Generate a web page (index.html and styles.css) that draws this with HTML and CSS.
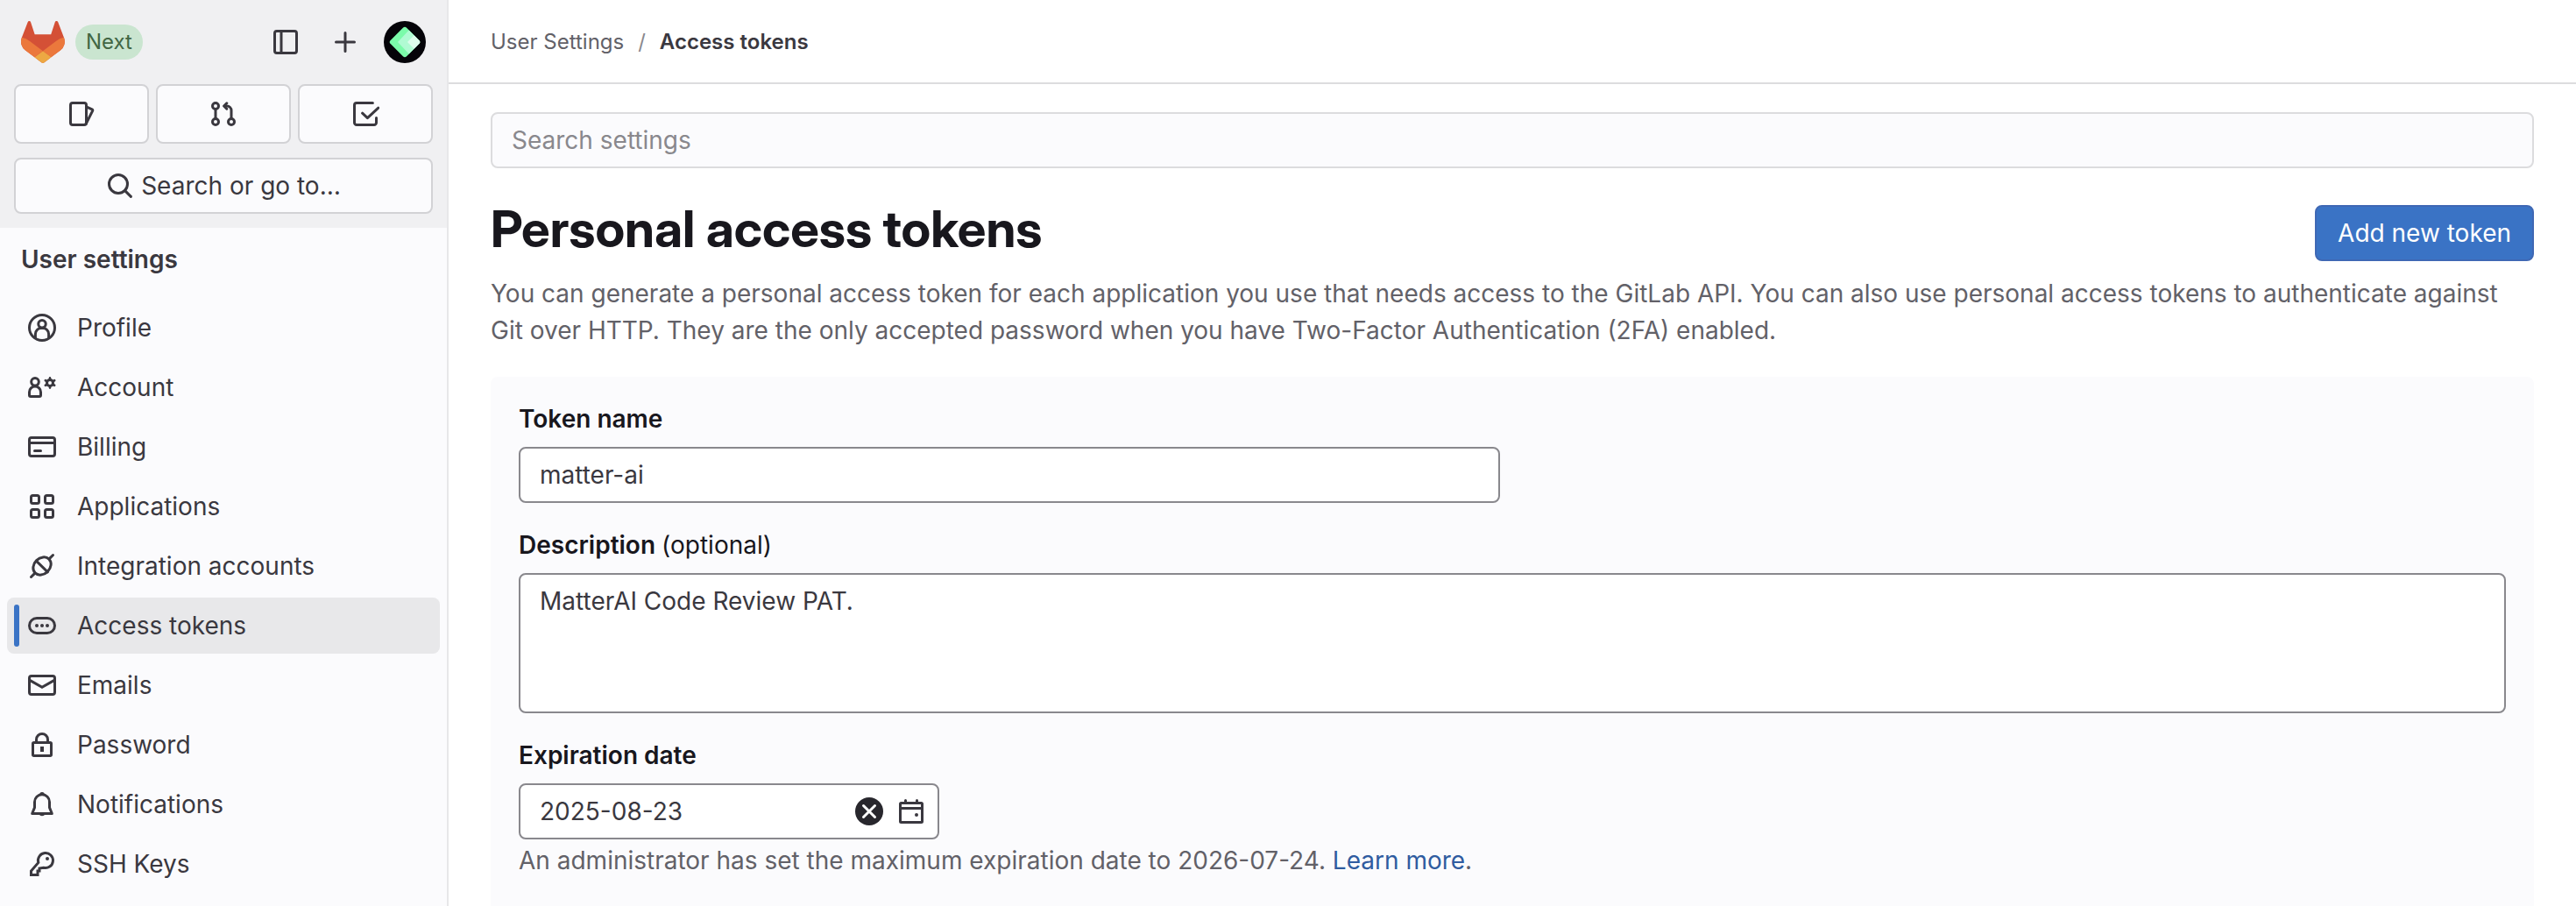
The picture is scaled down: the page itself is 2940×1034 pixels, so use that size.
FILE: index.html
```html
<!DOCTYPE html>
<html lang="en">
<head>
<meta charset="utf-8">
<title>Personal access tokens</title>
<link rel="stylesheet" href="styles.css">
</head>
<body class="page">
<aside class="sidebar">
  <div class="sidebar-top">
    <div class="brand-row">
      <a class="logo" href="#" aria-label="Homepage">
        <svg width="50" height="48" viewBox="0 0 25 24"><path fill="#d45036" d="M24.507 9.5l-.034-.09L21.082.562a.896.896 0 0 0-1.694.091l-2.29 7.01H7.825L5.535.653a.898.898 0 0 0-1.694-.09L.451 9.411.416 9.5a6.297 6.297 0 0 0 2.09 7.278l.012.01.03.022 5.16 3.867 2.56 1.935 1.554 1.176a1.051 1.051 0 0 0 1.268 0l1.555-1.176 2.56-1.935 5.197-3.89.014-.01A6.297 6.297 0 0 0 24.507 9.5z"/><path fill="#eb783c" d="M24.507 9.5l-.034-.09a11.44 11.44 0 0 0-4.56 2.051l-7.447 5.632 4.742 3.584 5.197-3.89.014-.01A6.297 6.297 0 0 0 24.507 9.5z"/><path fill="#eda843" d="M7.707 20.677l2.56 1.935 1.555 1.176a1.051 1.051 0 0 0 1.268 0l1.555-1.176 2.56-1.935-4.743-3.584-4.755 3.584z"/><path fill="#eb783c" d="M5.01 11.461a11.43 11.43 0 0 0-4.56-2.05L.416 9.5a6.297 6.297 0 0 0 2.09 7.278l.012.01.03.022 5.16 3.867 4.745-3.584-7.444-5.632z"/></svg>
      </a>
      <span class="badge">Next</span>
      <div class="brand-actions">
        <button class="icon-button" aria-label="Collapse sidebar"><svg class="icon" viewBox="0 0 16 16"><rect x="1.75" y="1.75" width="12.5" height="12.5" rx="1.2"/><path d="M5.5 2v12"/></svg></button>
        <button class="icon-button" aria-label="Create new"><svg class="icon" viewBox="0 0 16 16"><path stroke-linecap="round" d="M8 2.75v10.5M2.75 8h10.5"/></svg></button>
        <button class="avatar" aria-label="User menu"><svg width="48" height="48" viewBox="0 0 48 48"><circle cx="24" cy="24" r="24" fill="#050409"/><clipPath id="gem"><rect x="11" y="11" width="26" height="26" rx="3" transform="rotate(45 24 24)"/></clipPath><g clip-path="url(#gem)"><path fill="#7bfbaa" d="M0 0h48v48H0z"/><path fill="#b0fbd3" d="M31 8L16 24l15 16h17V8z"/><path fill="#defded" d="M36 15l-9 9 9 9h12V15z"/></g></svg></button>
      </div>
    </div>
    <div class="shortcuts">
      <button class="tile" aria-label="Issues"><svg class="icon" viewBox="0 0 16 16"><rect x="1.75" y="1.75" width="9" height="12.5" rx="1.2"/><path stroke-linejoin="round" d="M10.75 3.9l3.3 1.5a.6.6 0 0 1 .3.8L10.4 14"/></svg></button>
      <button class="tile" aria-label="Merge requests"><svg class="icon" viewBox="0 0 16 16"><circle cx="3.5" cy="3.5" r="1.75"/><circle cx="3.5" cy="12.5" r="1.75"/><circle cx="12.5" cy="12.5" r="1.75"/><path d="M3.5 5.25v5.5M12.5 10.75V6a2.5 2.5 0 0 0-2.5-2.5H8.4"/><path stroke-linecap="round" stroke-linejoin="round" d="M9.9 1.9L8.3 3.5l1.6 1.6"/></svg></button>
      <button class="tile" aria-label="To-do list"><svg class="icon" viewBox="0 0 16 16"><path stroke-linecap="round" d="M12.2 1.75H3A1.25 1.25 0 0 0 1.75 3v10A1.25 1.25 0 0 0 3 14.25h10A1.25 1.25 0 0 0 14.25 13v-2.800"/><path stroke-linecap="round" stroke-linejoin="round" d="M6.3 7.6l2.9 2.7 6.2-5.7"/></svg></button>
    </div>
    <button class="tile search-button"><svg class="icon" viewBox="0 0 16 16"><circle cx="7" cy="7" r="5.25"/><path stroke-linecap="round" d="M10.8 10.8l3.4 3.4"/></svg>Search or go to…</button>
  </div>
  <nav class="nav" aria-label="User settings">
    <h2 class="nav-title">User settings</h2>
    <ul class="nav-list">
      <li><a class="nav-item" href="#"><svg class="icon" viewBox="0 0 16 16"><circle cx="8" cy="8" r="7.25"/><circle cx="8" cy="5.9" r="2.1"/><path d="M4.200 14v-2.400A3.300 3.300 0 0 1 7.500 8.300h1a3.300 3.300 0 0 1 3.300 3.300V14"/></svg>Profile</a></li>
      <li><a class="nav-item" href="#"><svg class="icon" viewBox="0 0 16 16"><circle cx="4" cy="4.9" r="2.150"/><path d="M4 7.500A3.250 3.250 0 0 0 .75 10.750V12.500c0 .4.3.75.75.75h5c.4 0 .75-.3.75-.75V10.750A3.250 3.250 0 0 0 4 7.500z"/><circle cx="12.500" cy="5.500" r="1.750"/><path stroke-width="1.300" stroke-linecap="round" d="M12.500 2.700v.8M12.500 7.500v.8M9.900 4.100l.9.400M14.200 6.500l.9.400M9.900 6.900l.9-.4M14.200 4.500l.9-.4"/></svg>Account</a></li>
      <li><a class="nav-item" href="#"><svg class="icon" viewBox="0 0 16 16"><rect x=".75" y="2.750" width="14.500" height="10.500" rx="1.200"/><path d="M1 5.750h14"/><path stroke-linecap="round" d="M3.750 10.250h3.500"/></svg>Billing</a></li>
      <li><a class="nav-item" href="#"><svg class="icon" viewBox="0 0 16 16"><rect x="1.750" y="1.750" width="4.500" height="4.500" rx="1"/><rect x="9.750" y="1.750" width="4.500" height="4.500" rx="1"/><rect x="1.750" y="9.750" width="4.500" height="4.500" rx="1"/><rect x="9.750" y="9.750" width="4.500" height="4.500" rx="1"/></svg>Applications</a></li>
      <li><a class="nav-item" href="#"><svg class="icon" viewBox="0 0 16 16"><path stroke-linecap="round" d="M4.800 5.200l6.400 6.200M1.750 14.250L3.700 12.300M12.300 3.700l1.950-1.950"/><ellipse cx="8" cy="8" rx="5.600" ry="4.500" transform="rotate(-45 8 8)"/></svg>Integration accounts</a></li>
      <li><a class="nav-item nav-item-active" href="#" aria-current="page"><svg class="icon" viewBox="0 0 16 16"><rect x=".75" y="3.750" width="14.500" height="8.500" rx="4.250"/><g fill="currentColor" stroke="none"><circle cx="5" cy="8" r="1"/><circle cx="8" cy="8" r="1"/><circle cx="11" cy="8" r="1"/></g></svg>Access tokens</a></li>
      <li><a class="nav-item" href="#"><svg class="icon" viewBox="0 0 16 16"><rect x=".75" y="2.750" width="14.500" height="10.500" rx="1.200"/><path d="M1 5.200l7 3.900 7-3.900"/></svg>Emails</a></li>
      <li><a class="nav-item" href="#"><svg class="icon" viewBox="0 0 16 16"><rect x="2.750" y="6.750" width="10.500" height="7.500" rx=".6"/><path d="M4.750 6.750V5a3.250 3.250 0 0 1 6.500 0v1.750"/><path stroke-width="2" d="M8 9v3"/></svg>Password</a></li>
      <li><a class="nav-item" href="#"><svg class="icon" viewBox="0 0 16 16"><path stroke-linejoin="round" d="M3.750 6.600a4.250 4.250 0 0 1 8.500 0v3.200l1.400 3.450H2.350l1.400-3.450z"/><path fill="currentColor" stroke="none" d="M6.600 2.400a1.400 1.400 0 0 1 2.800 0zM6.300 13.500a1.750 1.500 0 0 0 3.400 0z"/></svg>Notifications</a></li>
      <li><a class="nav-item" href="#"><svg class="icon" viewBox="0 0 16 16"><path d="M5.900 7.200a4.250 4.250 0 1 1 2.900 2.900L6.500 10.500v1.500H5.500v2.250H1.750V12z"/><circle cx="11" cy="5" r="1" fill="currentColor" stroke="none"/></svg>SSH Keys</a></li>
    </ul>
  </nav>
</aside>
<div class="main">
  <header class="topbar">
    <nav class="breadcrumbs" aria-label="Breadcrumb">
      <a class="crumb" href="#">User Settings</a>
      <span class="crumb-separator">/</span>
      <a class="crumb crumb-current" href="#" aria-current="page">Access tokens</a>
    </nav>
  </header>
  <main class="content">
    <input class="settings-search" type="search" placeholder="Search settings" aria-label="Search settings">
    <div class="heading-row">
      <h1 class="heading">Personal access tokens</h1>
      <button class="primary-button">Add new token</button>
    </div>
    <p class="intro">You can generate a personal access token for each application you use that needs access to the GitLab API. You can also use personal access tokens to authenticate against Git over HTTP. They are the only accepted password when you have Two-Factor Authentication (2FA) enabled.</p>
    <form class="panel">
      <div class="field">
        <label class="label" for="token-name">Token name</label>
        <input class="control control-medium" id="token-name" type="text" value="matter-ai">
      </div>
      <div class="field">
        <label class="label" for="token-description">Description <span class="optional">(optional)</span></label>
        <textarea class="control control-area" id="token-description">MatterAI Code Review PAT.</textarea>
      </div>
      <div class="field">
        <label class="label" for="token-expiry">Expiration date</label>
        <div class="control date-control">
          <input class="date-input" id="token-expiry" type="text" value="2025-08-23">
          <button class="icon-button" type="button" aria-label="Clear date"><svg class="icon" viewBox="0 0 16 16"><circle cx="8" cy="8" r="8" fill="#28272d" stroke="none"/><path stroke="#fff" stroke-linecap="round" d="M4.750 4.750l6.500 6.500M11.250 4.750l-6.500 6.500"/></svg></button>
          <button class="icon-button" type="button" aria-label="Open calendar"><svg class="icon" viewBox="0 0 16 16"><rect x="1.750" y="3.250" width="12.500" height="11" rx=".5"/><path d="M1.750 6.250h12.500"/><path stroke-linecap="round" d="M4.750 1.750v1.500M11.250 1.750v1.500"/><circle cx="11" cy="10" r="1" fill="currentColor" stroke="none"/></svg></button>
        </div>
        <p class="help">An administrator has set the maximum expiration date to 2026-07-24. <a class="link" href="#">Learn more</a>.</p>
      </div>
    </form>
  </main>
</div>
</body>
</html>
```

FILE: styles.css
```css
*,
*::before {
  box-sizing: border-box;
}

.page {
  display: flex;
  min-height: 100vh;
  margin: 0;
  background: #fff;
  color: #3a383f;
  font: 400 28px/40px Inter, "Liberation Sans", sans-serif;
}

button,
input,
textarea {
  color: inherit;
  font: inherit;
}

a {
  color: inherit;
  text-decoration: none;
}

.icon {
  flex: none;
  display: block;
  width: 32px;
  height: 32px;
  fill: none;
  stroke: currentColor;
  stroke-width: 1.5;
}

/* Sidebar */

.sidebar {
  flex: none;
  width: 512px;
  border-right: 2px solid #e7e7e9;
  background: #fbfbfd;
}

.sidebar-top {
  display: flex;
  flex-direction: column;
  gap: 16px;
  padding: 0 16px 16px;
  background: #f0f0f2;
}

.brand-row {
  display: flex;
  align-items: center;
  height: 80px;
  padding: 16px 8px 0;
}

.logo {
  display: block;
  height: 48px;
}

.badge {
  margin-left: 12px;
  padding: 0 12px;
  border-radius: 20px;
  background: #cae5d0;
  color: #426644;
  font-size: 24px;
  line-height: 40px;
}

.brand-actions {
  display: flex;
  align-items: center;
  gap: 36px;
  margin-left: auto;
}

.icon-button,
.avatar {
  flex: none;
  padding: 0;
  border: 0;
  background: none;
}

.avatar {
  height: 48px;
  margin-left: -8px;
}

.shortcuts {
  display: grid;
  grid-template-columns: repeat(3, 1fr);
  gap: 8px;
}

.tile {
  display: flex;
  align-items: center;
  justify-content: center;
  gap: 8px;
  height: 68px;
  padding: 0;
  border: 2px solid #d2d2d5;
  border-radius: 8px;
  background: #fbfbfd;
}

.search-button {
  height: 64px;
}

.nav {
  padding: 4px 8px;
}

.nav-title {
  margin: 0 0 14px;
  padding: 12px 16px;
  font-size: 28px;
  font-weight: 600;
  line-height: 40px;
}

.nav-list {
  display: flex;
  flex-direction: column;
  gap: 4px;
  margin: 0;
  padding: 0;
  list-style: none;
}

.nav-item {
  position: relative;
  display: flex;
  align-items: center;
  gap: 24px;
  height: 64px;
  padding: 0 24px;
  border-radius: 8px;
}

.nav-item-active {
  background: #e8e8ea;
}

.nav-item-active::before {
  content: "";
  position: absolute;
  top: 8px;
  bottom: 8px;
  left: 8px;
  width: 6px;
  border-radius: 3px;
  background: #3a73c5;
}

/* Main column */

.main {
  flex: 1;
  display: flex;
  flex-direction: column;
  min-width: 0;
}

.topbar {
  display: flex;
  align-items: center;
  height: 96px;
  padding: 2px 48px 0;
  border-bottom: 2px solid #dcdcde;
}

.breadcrumbs {
  display: flex;
  gap: 16px;
  color: #626168;
  font-size: 24px;
}

.crumb-separator {
  color: #89888d;
}

.crumb-current {
  color: #3a383f;
  font-weight: 600;
}

.content {
  flex: 1;
  display: flex;
  flex-direction: column;
  padding: 32px 48px 0;
}

.settings-search {
  width: 100%;
  height: 64px;
  padding: 0 22px;
  border: 2px solid #dcdcde;
  border-radius: 8px;
  background: #fbfbfd;
}

.settings-search::placeholder {
  color: #89888d;
  opacity: 1;
}

.heading-row {
  display: flex;
  align-items: flex-start;
  justify-content: space-between;
  margin-top: 32px;
}

.heading {
  margin: 0;
  color: #18171d;
  font-family: "Inter Display", Inter, "Liberation Sans", sans-serif;
  font-size: 58px;
  font-weight: 700;
  line-height: 74px;
}

.primary-button {
  height: 64px;
  margin-top: 10px;
  padding: 0 24px;
  border: 2px solid #3f68b4;
  border-radius: 8px;
  background: #3a73c5;
  color: #fff;
}

.intro {
  margin: 16px 0 32px;
  color: #626168;
  line-height: 42px;
}

.panel {
  flex: 1;
  display: flex;
  flex-direction: column;
  gap: 32px;
  padding: 32px 32px 24px;
  border-radius: 8px 8px 0 0;
  background: #fbfbfd;
}

.label {
  display: block;
  margin-bottom: 16px;
  color: #18171d;
  font-weight: 600;
  line-height: 32px;
}

.optional {
  font-weight: 400;
}

.control {
  display: block;
  width: 100%;
  height: 64px;
  padding: 0 22px;
  border: 2px solid #89888d;
  border-radius: 8px;
  background: #fff;
}

.control-medium {
  max-width: 1120px;
}

.control-area {
  height: 160px;
  padding-top: 10px;
  resize: none;
}

.date-control {
  display: flex;
  align-items: center;
  gap: 16px;
  max-width: 480px;
  padding-right: 14px;
}

.date-input {
  flex: 1;
  min-width: 0;
  padding: 0;
  border: 0;
  background: none;
}

.help {
  margin: 4px 0 0;
  color: #626168;
}

.link {
  color: #2f5ca0;
}
```
